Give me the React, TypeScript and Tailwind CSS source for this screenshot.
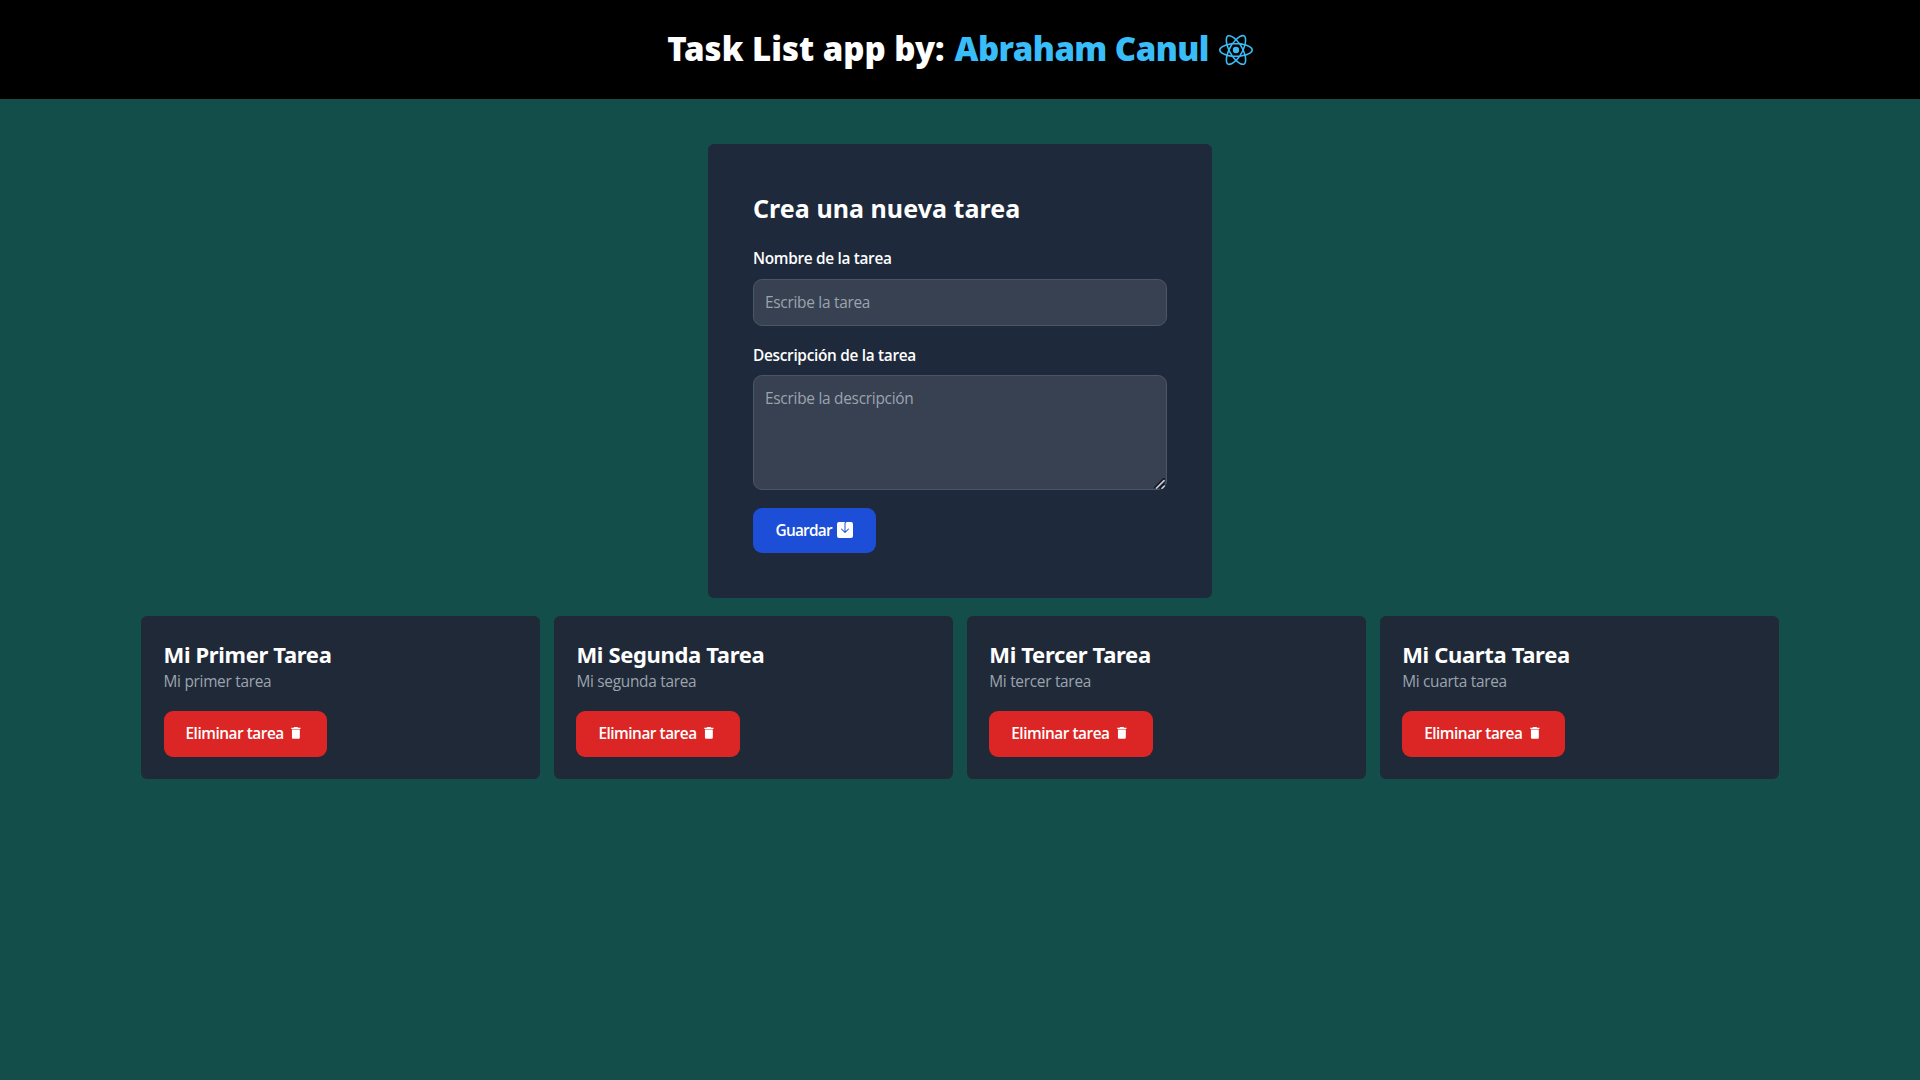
import { SiReact } from "react-icons/si";
import { BsSaveFill } from "react-icons/bs";
import { MdDelete } from "react-icons/md";

type Task = { id: number; title: string; description: string };

const tasks: Task[] = [
  { id: 0, title: "Mi Primer Tarea", description: "Mi primer tarea" },
  { id: 1, title: "Mi Segunda Tarea", description: "Mi segunda tarea" },
  { id: 2, title: "Mi Tercer Tarea", description: "Mi tercer tarea" },
  { id: 3, title: "Mi Cuarta Tarea", description: "Mi cuarta tarea" },
];

function Header() {
  return (
    <header className="flex h-[99px] justify-center bg-black pt-[31px]">
      <h1 className="flex h-9 items-center font-['Noto_Sans',sans-serif] text-[33px] leading-9 font-black whitespace-nowrap text-white">
        <span>Task List app by:</span>
        <span className="ml-[10px] tracking-[-0.57px] text-[#38bdf8]">Abraham Canul</span>
        <SiReact className="mt-0.5 ml-[10px] size-[34px] text-[#38bdf8]" />
      </h1>
    </header>
  );
}

/* Diagonal grip in the lower right corner of the text area */
function ResizeGrip() {
  return (
    <svg className="pointer-events-none absolute right-[2px] bottom-[1px] size-[11px]" viewBox="0 0 11 11" fill="none">
      <path d="M0.5 10 L10 0.5 V3 M6 10.5 L10.5 6" stroke="#111322" strokeWidth="1.6" />
      <path d="M2 10.5 L10.5 2 M7.5 10.8 L10.8 7.5" stroke="#c9c8d0" strokeWidth="1.6" />
      <path d="M4.5 10.5 L10.5 4.5" stroke="#111322" strokeWidth="1" />
    </svg>
  );
}

function TaskForm() {
  return (
    <form
      className="mx-auto mt-[45px] flex h-[454px] w-[504px] flex-col items-start rounded-md bg-[#1e293b] p-[45px]"
      onSubmit={(e) => e.preventDefault()}
    >
      <h2 className="font-['Noto_Sans',sans-serif] text-[25px] leading-[38px] font-bold tracking-[0.05px] text-white">
        Crea una nueva tarea
      </h2>
      <label htmlFor="title" className="mt-[20px] text-[15.4px] leading-6 font-semibold tracking-[-0.32px] text-white">
        Nombre de la tarea
      </label>
      <input
        id="title"
        placeholder="Escribe la tarea"
        className="mt-[8px] h-[47px] w-full rounded-[9px] border border-[#4b5563] bg-[#374151] px-[11px] text-[15.4px] tracking-[-0.27px] text-white placeholder:text-[#9ca3af]"
      />
      <label htmlFor="description" className="mt-[18px] text-[15.4px] leading-6 font-semibold tracking-[-0.31px] text-white">
        Descripción de la tarea
      </label>
      <div className="relative mt-[7px] h-[115px] w-full shrink-0">
        <textarea
          id="description"
          placeholder="Escribe la descripción"
          className="block h-full w-full resize-none rounded-[9px] border border-[#4b5563] bg-[#374151] px-[11px] py-3 text-[15.4px] leading-[22px] tracking-[-0.26px] text-white placeholder:text-[#9ca3af]"
        />
        <ResizeGrip />
      </div>
      <button className="mt-[18px] flex h-[45px] w-[123px] shrink-0 items-center rounded-[9px] bg-[#1d4ed8] pl-[22.5px] text-left text-[15.4px] font-semibold text-white">
        <span className="w-[61.5px] tracking-[-0.75px]">Guardar</span>
        <BsSaveFill className="mb-[2px] size-4" />
      </button>
    </form>
  );
}

function TaskCard({ task }: { task: Task }) {
  return (
    <article className="h-[163px] rounded-md bg-[#1f2937] px-[22.5px] pt-[23px]">
      <h3 className="font-['Noto_Sans',sans-serif] text-[22px] leading-[30px] font-bold tracking-[-0.34px] text-white">
        {task.title}
      </h3>
      <p className="mt-px text-[15.4px] leading-6 tracking-[-0.28px] text-[#9ca3af]">{task.description}</p>
      <button className="mt-[17px] flex h-[46px] w-[163.3px] items-center rounded-[9px] bg-[#dc2626] pl-[22px] text-left text-[15.4px] font-semibold text-white">
        <span className="w-[102.5px] tracking-[-0.48px]">Eliminar tarea</span>
        <MdDelete className="mb-[2px] size-[15.75px]" />
      </button>
    </article>
  );
}

export default function App() {
  return (
    <div className="flex min-h-screen flex-col bg-[#134e4a] font-['Open_Sans','Noto_Sans',sans-serif]">
      <Header />
      <main className="mx-auto w-[1638px]">
        <TaskForm />
        <section className="mt-[18px] grid grid-cols-4 gap-[13.5px]">
          {tasks.map((task) => (
            <TaskCard key={task.id} task={task} />
          ))}
        </section>
      </main>
    </div>
  );
}
